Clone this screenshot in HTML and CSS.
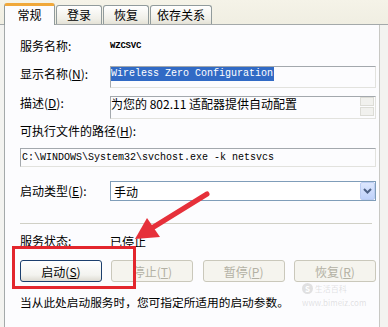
FILE: index.html
```html
<!DOCTYPE html>
<html lang="zh-CN">
<head>
  <meta charset="UTF-8" />
  <meta name="viewport" content="width=device-width, initial-scale=1.0" />
  <title>服务属性</title>
  <link rel="stylesheet" href="styles.css">
</head>
<body>
  <div class="tabs">
    <div class="tab active">常规</div>
    <div class="tab">登录</div>
    <div class="tab">恢复</div>
    <div class="tab">依存关系</div>
  </div>

  <div class="panel">
    <div class="row row-name">
      <span class="label">服务名称:</span>
      <span class="service-id">WZCSVC</span>
    </div>

    <div class="row row-top row-display">
      <span class="label">显示名称(<u>N</u>):</span>
      <div class="edit edit-display"><span class="selected">Wireless Zero Configuration</span></div>
    </div>

    <div class="row row-top row-desc">
      <span class="label">描述(<u>D</u>):</span>
      <div class="edit edit-desc">
        <span class="desc-text">为您的 802.11 适配器提供自动配置</span>
        <div class="spin"><span></span><span></span></div>
      </div>
    </div>

    <div class="path-label">可执行文件的路径(<u>H</u>):</div>
    <div class="edit edit-path">C:\WINDOWS\System32\svchost.exe -k netsvcs</div>

    <div class="row row-startup">
      <span class="label">启动类型(<u>E</u>):</span>
      <div class="combo">
        <span>手动</span>
        <span class="drop">
          <svg width="9" height="6" viewBox="0 0 9 6"><path d="M1 1 L4.5 4.5 L8 1" fill="none" stroke="#4d6185" stroke-width="2"/></svg>
        </span>
      </div>
    </div>

    <div class="sep"></div>

    <div class="row row-status">
      <span class="label">服务状态:</span>
      <span>已停止</span>
    </div>

    <div class="buttons">
      <div class="btn">启动(<u>S</u>)</div>
      <div class="btn disabled">停止(<u>T</u>)</div>
      <div class="btn disabled">暂停(<u>P</u>)</div>
      <div class="btn disabled">恢复(<u>R</u>)</div>
    </div>

    <p class="hint">当从此处启动服务时，您可指定所适用的启动参数。</p>
  </div>

  <!-- annotation layer -->
  <div class="callout-box"></div>
  <svg class="arrow" width="388" height="327" viewBox="0 0 388 327">
    <line x1="207" y1="194" x2="152" y2="228" stroke="#e6303a" stroke-width="5" stroke-linecap="round"/>
    <polygon points="135,239 147,218 160,237" fill="#e6303a"/>
  </svg>
  <div class="watermark">
    <div><span class="wm-logo">S</span> 生活百科</div>
    <div>www.bimeiz.com</div>
  </div>
</body>
</html>
```

FILE: styles.css
```css
body {
  margin: 0;
  width: 388px;
  height: 327px;
  overflow: hidden;
  position: relative;
  background: #f3f3f0;
  font-family: "Noto Sans CJK SC", "Liberation Sans", sans-serif;
  font-size: 12px;
  color: #000;
}

u {
  text-decoration: underline;
  text-underline-offset: 1px;
}

/* tab strip */
.tabs {
  display: flex;
  align-items: flex-end;
  height: 24px;
  padding-left: 4px;
  background: linear-gradient(#f5f3e8, #f0eee2);
  border-bottom: 1px solid #a4a9aa;
}

.tab {
  box-sizing: border-box;
  height: 19px;
  width: 46px;
  margin-left: 1px;
  border: 1px solid #919b9c;
  border-bottom: none;
  border-radius: 3px 3px 0 0;
  background: linear-gradient(#ffffff, #f0efe8 70%, #e4e2d6);
  display: flex;
  align-items: center;
  justify-content: center;
  line-height: 16px;
}

.tab:last-child {
  width: 62px;
}

.tab.active {
  position: relative;
  width: 51px;
  height: 22px;
  margin-left: 0;
  margin-bottom: -1px;
  border-top: 3px solid #f0a83a;
  background: #fcfcfe;
  padding-bottom: 2px;
}

/* main page of the dialog */
.panel {
  box-sizing: border-box;
  margin-left: 4px;
  width: 376px;
  height: 302px;
  padding: 11px 3px 0 15px;
  border-left: 1px solid #a4a9aa;
  border-right: 1px solid #c8c8c4;
  background: #fcfcfe;
}

.row {
  display: flex;
  align-items: center;
}

.row-top {
  align-items: flex-start;
}

.label {
  width: 90px;
  flex: none;
  line-height: 16px;
}

.row-name {
  height: 20px;
}

.service-id {
  font-family: "Liberation Mono", monospace;
  font-size: 9px;
  font-weight: bold;
  letter-spacing: -0.2px;
}

.edit {
  box-sizing: border-box;
  border: 1px solid;
  border-color: #a3a8ad #e2e2de #e2e2de #a3a8ad;
  background: #fcfcfe;
}

.row-display {
  margin-top: 10px;
}

.edit-display {
  flex: 1;
  height: 22px;
  font-family: "Liberation Mono", monospace;
  font-size: 10px;
}

.selected {
  display: inline-block;
  background: #316ac5;
  color: #fff;
  line-height: 14px;
  padding-right: 1px;
}

.row-desc {
  margin-top: 8px;
}

.row-desc .label {
  margin-top: -1px;
}

.edit-desc {
  flex: 1;
  height: 23px;
  display: flex;
  align-items: flex-start;
  justify-content: space-between;
}

.desc-text {
  line-height: 14px;
}

.spin {
  display: flex;
  flex-direction: column;
  gap: 1px;
  margin-right: 1px;
}

.spin span {
  width: 14px;
  height: 9px;
  box-sizing: border-box;
  border: 1px solid #dcdcd6;
  background: #f1f1ee;
}

.path-label {
  margin-top: 4px;
  line-height: 16px;
}

.edit-path {
  margin-top: 9px;
  height: 19px;
  padding-left: 1px;
  font-family: "Liberation Mono", monospace;
  font-size: 10px;
  line-height: 17px;
}

.row-startup {
  margin-top: 14px;
}

.combo {
  flex: 1;
  height: 20px;
  box-sizing: border-box;
  border: 1px solid #7f9db9;
  display: flex;
  align-items: center;
  padding-left: 3px;
  background: #fff;
}

.drop {
  margin-left: auto;
  width: 15px;
  height: 18px;
  box-sizing: border-box;
  border: 1px solid #bccdf2;
  border-radius: 2px;
  background: linear-gradient(#dde7fd, #bfd2fb);
  display: flex;
  align-items: center;
  justify-content: center;
}

.sep {
  margin: 22px 4px 0 0;
  border-top: 1px solid #d0d0c6;
}

.row-status {
  margin-top: 9px;
  height: 16px;
}

.buttons {
  margin-top: 11px;
  display: flex;
  justify-content: space-between;
}

.btn {
  box-sizing: border-box;
  width: 82px;
  height: 22px;
  border: 1px solid #1c3f6e;
  border-radius: 3px;
  background: linear-gradient(#ffffff, #f3f3ef 70%, #dedbd2);
  display: flex;
  align-items: center;
  justify-content: center;
}

.btn.disabled {
  border-color: #cac8bb;
  color: #b3b1a4;
  background: #f5f4ee;
}

.hint {
  margin: 12px 0 0;
  line-height: 16px;
  font-size: 11.7px;
}

/* red annotation over the dialog */
.callout-box {
  position: absolute;
  left: 12px;
  top: 246px;
  width: 124px;
  height: 43px;
  box-sizing: border-box;
  border: 3px solid #e3262d;
}

.arrow {
  position: absolute;
  left: 0;
  top: 0;
  pointer-events: none;
}

.watermark {
  position: absolute;
  left: 302px;
  top: 283px;
  display: flex;
  flex-direction: column;
  gap: 2px;
  font-size: 8px;
  line-height: 12px;
  color: rgba(190, 190, 190, 0.45);
}

.wm-logo {
  display: inline-block;
  width: 11px;
  height: 11px;
  line-height: 11px;
  border-radius: 50%;
  background: rgba(190, 190, 190, 0.45);
  color: #fff;
  text-align: center;
  font-weight: bold;
}
```
